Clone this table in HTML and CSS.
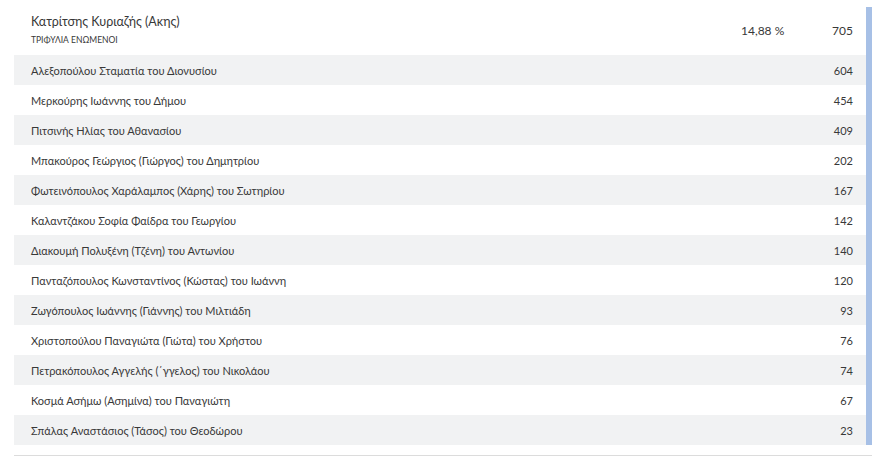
FILE: index.html
```html
<!DOCTYPE html>
<html>
<head>
<meta charset="utf-8">
<link rel="stylesheet" href="styles.css">
</head>
<body>
<div class="wrap">
  <div class="panel">
    <div class="head">
      <div class="who">
        <div class="name">Κατρίτσης Κυριαζής (Ακης)</div>
        <div class="party">ΤΡΙΦΥΛΙΑ ΕΝΩΜΕΝΟΙ</div>
      </div>
      <div class="pct">14,88 %</div>
      <div class="votes">705</div>
    </div>
    <div class="list">
      <div class="row"><span>Αλεξοπούλου Σταματία του Διονυσίου</span><span>604</span></div>
      <div class="row"><span>Μερκούρης Ιωάννης του Δήμου</span><span>454</span></div>
      <div class="row"><span>Πιτσινής Ηλίας του Αθανασίου</span><span>409</span></div>
      <div class="row"><span>Μπακούρος Γεώργιος (Γιώργος) του Δημητρίου</span><span>202</span></div>
      <div class="row"><span>Φωτεινόπουλος Χαράλαμπος (Χάρης) του Σωτηρίου</span><span>167</span></div>
      <div class="row"><span>Καλαντζάκου Σοφία Φαίδρα του Γεωργίου</span><span>142</span></div>
      <div class="row"><span>Διακουμή Πολυξένη (Τζένη) του Αντωνίου</span><span>140</span></div>
      <div class="row"><span>Πανταζόπουλος Κωνσταντίνος (Κώστας) του Ιωάννη</span><span>120</span></div>
      <div class="row"><span>Ζωγόπουλος Ιωάννης (Γιάννης) του Μιλτιάδη</span><span>93</span></div>
      <div class="row"><span>Χριστοπούλου Παναγιώτα (Γιώτα) του Χρήστου</span><span>76</span></div>
      <div class="row"><span>Πετρακόπουλος Αγγελής (΄γγελος) του Νικολάου</span><span>74</span></div>
      <div class="row"><span>Κοσμά Ασήμω (Ασημίνα) του Παναγιώτη</span><span>67</span></div>
      <div class="row"><span>Σπάλας Αναστάσιος (Τάσος) του Θεοδώρου</span><span>23</span></div>
    </div>
  </div>
  <div class="rule"></div>
</div>
</body>
</html>
```
FILE: styles.css
```css
html, body { margin: 0; padding: 0; background: #fff; }
body {
  font-family: Lato, "Liberation Sans", sans-serif;
  color: #383838;
  font-size: 11px;
}
.wrap { padding: 7px 13px 0 14px; width: 858px; }
.panel {
  border-right: 6px solid #a7c0e6;
}
.head {
  display: flex;
  align-items: flex-start;
  height: 48px;
  padding-left: 17px;
  padding-right: 13px;
}
.who { flex: 1; }
.name { font-size: 12.5px; line-height: 18px; margin-top: 6px; }
.party { font-size: 8.5px; line-height: 11px; margin-top: 4px; }
.pct { font-size: 12px; line-height: 18px; margin-top: 15px; width: 82px; }
.votes { font-size: 12px; line-height: 18px; margin-top: 15px; width: 30px; text-align: right; }
.row {
  display: flex;
  justify-content: space-between;
  align-items: center;
  height: 30px;
  padding: 0 13px 0 17px;
}
.row:nth-child(odd) { background: #f1f2f3; }
.rule { height: 1px; background: #dcdcdc; margin-top: 10px; width: 858px; }
```
